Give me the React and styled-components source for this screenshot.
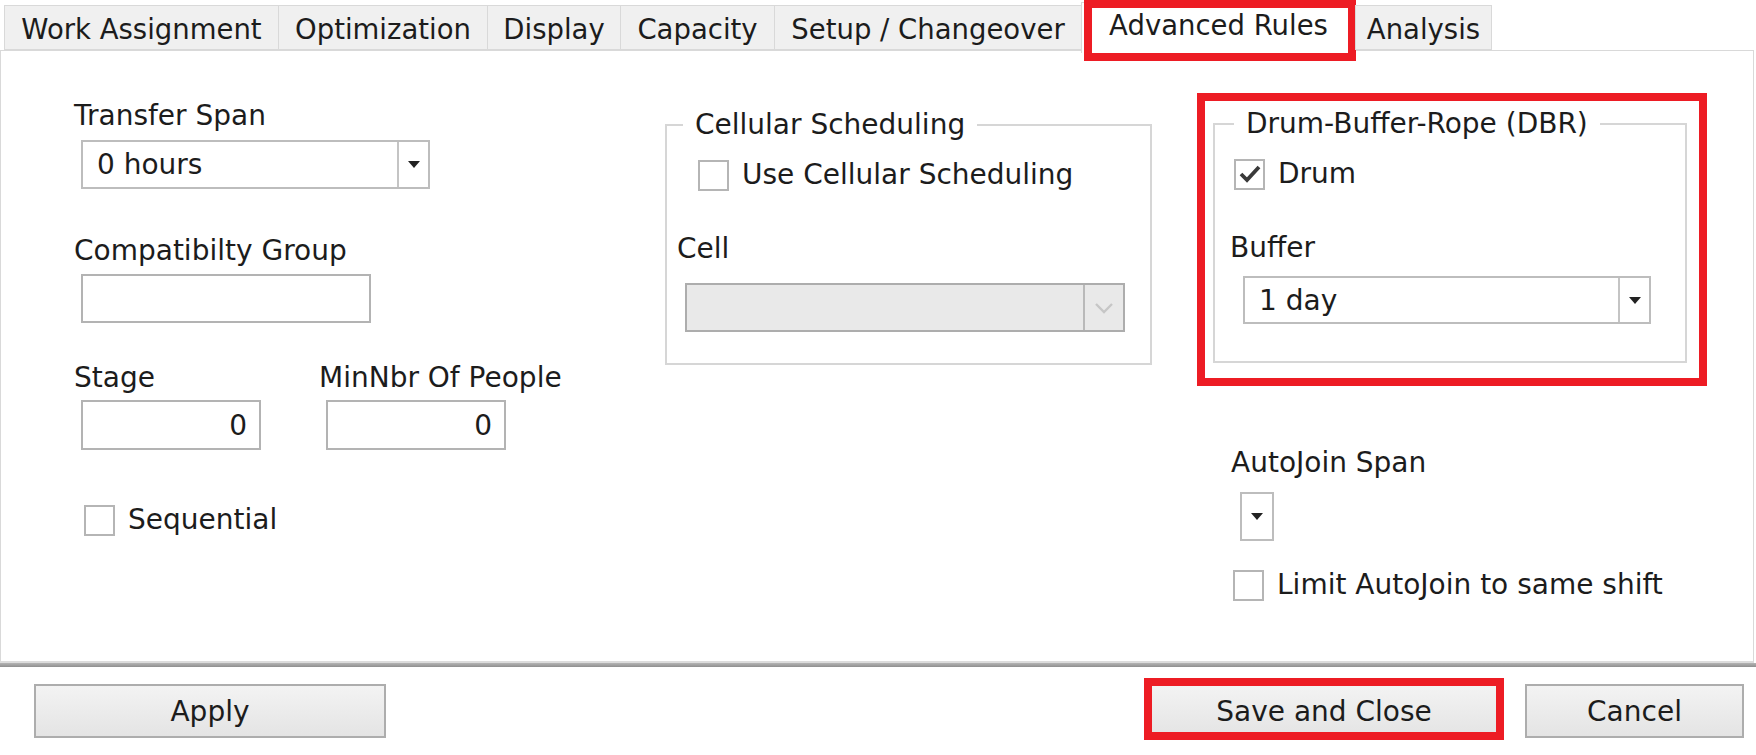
import React from "react";
import styled, { createGlobalStyle } from "styled-components";

const GlobalStyle = createGlobalStyle`
  html, body {
    margin: 0;
    padding: 0;
    background: #ffffff;
  }
  body {
    font-family: "DejaVu Sans", Verdana, sans-serif;
    color: #1c1c1c;
  }
  * {
    box-sizing: border-box;
  }
`;

const RED = "#ed1c24";

const Window = styled.div`
  width: 1756px;
  height: 755px;
  display: flex;
  flex-direction: column;
  overflow: hidden;
  background: #fff;
`;

const TabStrip = styled.div`
  display: flex;
  align-items: flex-end;
  height: 50px;
  padding-left: 5px;
  position: relative;
  z-index: 2;
`;

const Tab = styled.div`
  position: relative;
  width: ${(p) => p.$w}px;
  height: ${(p) => (p.$active ? 51 : 45)}px;
  margin-left: -1px;
  margin-bottom: ${(p) => (p.$active ? -3 : 0)}px;
  display: flex;
  align-items: center;
  justify-content: center;
  padding-top: ${(p) => (p.$active ? 0 : 3)}px;
  padding-bottom: ${(p) => (p.$active ? 6 : 0)}px;
  background: ${(p) => (p.$active ? "#ffffff" : "#f0f0f0")};
  border: 1px solid #d9d9d9;
  border-bottom: ${(p) => (p.$active ? "none" : "1px solid #d9d9d9")};
  font-size: 27.5px;
  white-space: nowrap;
  color: #1c1c1c;

  &::after {
    content: "";
    display: ${(p) => (p.$marked ? "block" : "none")};
    position: absolute;
    left: 2px;
    right: -1px;
    top: -3px;
    bottom: -8px;
    border: 8px solid ${RED};
    pointer-events: none;
  }
`;

const Panel = styled.div`
  width: 1754px;
  height: 613px;
  border: 1px solid #d9d9d9;
  border-bottom: 2px solid #dcdcdc;
  display: flex;
  align-items: flex-start;
  padding-left: 73px;
`;

const Separator = styled.div`
  height: 4px;
  background: linear-gradient(#b4b4b4, #8f8f8f);
`;

const Column = styled.div`
  display: flex;
  flex-direction: column;
  align-items: flex-start;
  width: ${(p) => p.$w}px;
  margin-top: ${(p) => p.$top || 0}px;
  margin-left: ${(p) => p.$left || 0}px;
`;

const Label = styled.div`
  font-size: 28px;
  line-height: 32px;
  white-space: nowrap;
  margin-top: ${(p) => p.$top || 0}px;
  margin-left: ${(p) => p.$indent || 0}px;
`;

const InputBox = styled.div`
  width: ${(p) => p.$w}px;
  height: ${(p) => p.$h || 49}px;
  margin-top: ${(p) => p.$top || 0}px;
  margin-left: ${(p) => p.$indent || 7}px;
  border: 2px solid #b3b3b3;
  background: #fff;
  display: flex;
  align-items: center;
  justify-content: ${(p) => (p.$right ? "flex-end" : "flex-start")};
  padding: 0 12px 0 14px;
  font-size: 28px;
`;

const Combo = styled.div`
  width: ${(p) => p.$w}px;
  height: ${(p) => p.$h || 49}px;
  margin-top: ${(p) => p.$top || 0}px;
  margin-left: ${(p) => p.$indent || 0}px;
  border: 2px solid ${(p) => (p.$disabled ? "#adadad" : "#bdbdbd")};
  background: ${(p) => (p.$disabled ? "#e9e9e9" : "#fff")};
  display: flex;
  align-items: stretch;
  font-size: 28px;
`;

const ComboText = styled.div`
  flex: 1;
  display: flex;
  align-items: center;
  padding-left: 14px;
  white-space: nowrap;
`;

const ComboButton = styled.div`
  width: ${(p) => p.$w || 31}px;
  display: flex;
  align-items: center;
  justify-content: center;
  border-left: ${(p) => (p.$bare ? "none" : "2px solid #c4c4c4")};
  border-left-color: ${(p) => (p.$disabled ? "#b9b9b9" : "#c4c4c4")};
`;

const Arrow = () => (
  <svg width="12" height="7" viewBox="0 0 12 7">
    <path d="M0 0 H12 L6 7 Z" fill="#222" />
  </svg>
);

const Chevron = () => (
  <svg width="20" height="12" viewBox="0 0 20 12">
    <path d="M2 2 L10 10 L18 2" fill="none" stroke="#c6c6c6" strokeWidth="2.4" />
  </svg>
);

const Row = styled.div`
  display: flex;
  align-items: flex-start;
  margin-top: ${(p) => p.$top || 0}px;
`;

const Field = styled.div`
  display: flex;
  flex-direction: column;
  align-items: flex-start;
  width: ${(p) => (p.$w ? `${p.$w}px` : "auto")};
`;

const CheckRow = styled.label`
  display: flex;
  align-items: center;
  gap: 13px;
  font-size: 28px;
  line-height: 32px;
  white-space: nowrap;
  margin-top: ${(p) => p.$top || 0}px;
  margin-left: ${(p) => p.$indent || 0}px;
`;

const Box = styled.span`
  width: 31px;
  height: 31px;
  border: 2px solid #b5b5b5;
  background: #fff;
  display: flex;
  align-items: center;
  justify-content: center;
`;

const Check = ({ checked }) => (
  <Box>
    {checked && (
      <svg width="22" height="20" viewBox="0 0 22 20">
        <path d="M2 10 L8 16 L20 3" fill="none" stroke="#3a3a3a" strokeWidth="3.8" />
      </svg>
    )}
  </Box>
);

const Group = styled.fieldset`
  width: ${(p) => p.$w}px;
  margin: 0;
  border: 2px solid #d6d6d6;
  padding: 18px 0 ${(p) => p.$bottom || 31}px 0;
  display: flex;
  flex-direction: column;
  align-items: flex-start;
`;

const Legend = styled.legend`
  font-size: 28px;
  line-height: 32px;
  padding: 0 12px;
  margin-left: ${(p) => p.$left || 16}px;
  white-space: nowrap;
`;

const Highlight = styled.div`
  border: 8px solid ${RED};
  padding: ${(p) => p.$pad};
`;

const Footer = styled.div`
  flex: 1;
  display: flex;
  align-items: flex-start;
  padding: 17px 12px 0 34px;
`;

const Button = styled.div`
  position: relative;
  width: ${(p) => p.$w}px;
  height: 54px;
  margin-left: ${(p) => p.$left || 0}px;
  border: 2px solid #adadad;
  background: linear-gradient(#f3f3f3, #e4e4e4);
  display: flex;
  align-items: center;
  justify-content: center;
  font-size: 28px;
  color: #1c1c1c;

  &::after {
    content: "";
    display: ${(p) => (p.$marked ? "block" : "none")};
    position: absolute;
    left: -8px;
    right: -8px;
    top: -8px;
    bottom: -4px;
    border: 8px solid ${RED};
    pointer-events: none;
  }
`;

const tabs = [
  { label: "Work Assignment", w: 275 },
  { label: "Optimization", w: 210 },
  { label: "Display", w: 134 },
  { label: "Capacity", w: 155 },
  { label: "Setup / Changeover", w: 308 },
  { label: "Advanced Rules", w: 275, active: true },
  { label: "Analysis", w: 137 },
];

export default function App() {
  return (
    <>
      <GlobalStyle />
      <Window>
        <TabStrip>
          {tabs.map((t) => (
            <Tab key={t.label} $w={t.w} $active={t.active} $marked={t.active}>
              {t.label}
            </Tab>
          ))}
        </TabStrip>

        <Panel>
          <Column $w={591} $top={49}>
            <Label>Transfer Span</Label>
            <Combo $w={349} $h={49} $top={8} $indent={7}>
              <ComboText>0 hours</ComboText>
              <ComboButton>
                <Arrow />
              </ComboButton>
            </Combo>

            <Label $top={46}>Compatibilty Group</Label>
            <InputBox $w={290} $top={7} />

            <Row $top={39}>
              <Field $w={245}>
                <Label>Stage</Label>
                <InputBox $w={180} $h={50} $top={6} $right>
                  0
                </InputBox>
              </Field>
              <Field>
                <Label>MinNbr Of People</Label>
                <InputBox $w={180} $h={50} $top={6} $right>
                  0
                </InputBox>
              </Field>
            </Row>

            <CheckRow $top={54} $indent={10}>
              <Check />
              Sequential
            </CheckRow>
          </Column>

          <Column $w={487} $top={58}>
            <Group $w={487}>
              <Legend $left={16}>Cellular Scheduling</Legend>
              <CheckRow $indent={31}>
                <Check />
                Use Cellular Scheduling
              </CheckRow>
              <Label $top={42} $indent={10}>
                Cell
              </Label>
              <Combo $w={440} $h={49} $top={18} $indent={18} $disabled>
                <ComboText />
                <ComboButton $w={40} $disabled>
                  <Chevron />
                </ComboButton>
              </Combo>
            </Group>
          </Column>

          <Column $w={506} $top={42} $left={45}>
            <Highlight $pad="7px 12px 15px 8px">
              <Group $w={474} $bottom={37}>
                <Legend $left={19}>Drum-Buffer-Rope (DBR)</Legend>
                <CheckRow $indent={19}>
                  <Check checked />
                  Drum
                </CheckRow>
                <Label $top={42} $indent={15}>
                  Buffer
                </Label>
                <Combo $w={408} $h={48} $top={12} $indent={28}>
                  <ComboText>1 day</ComboText>
                  <ComboButton>
                    <Arrow />
                  </ComboButton>
                </Combo>
              </Group>
            </Highlight>

            <Label $top={61} $indent={34}>
              AutoJoin Span
            </Label>
            <Combo $w={34} $h={49} $top={13} $indent={43}>
              <ComboButton $w={30} $bare>
                <Arrow />
              </ComboButton>
            </Combo>
            <CheckRow $top={28} $indent={36}>
              <Check />
              Limit AutoJoin to same shift
            </CheckRow>
          </Column>
        </Panel>

        <Separator />

        <Footer>
          <Button $w={352}>Apply</Button>
          <Button $w={348} $left={764} $marked>
            Save and Close
          </Button>
          <Button $w={219} $left={27}>
            Cancel
          </Button>
        </Footer>
      </Window>
    </>
  );
}
